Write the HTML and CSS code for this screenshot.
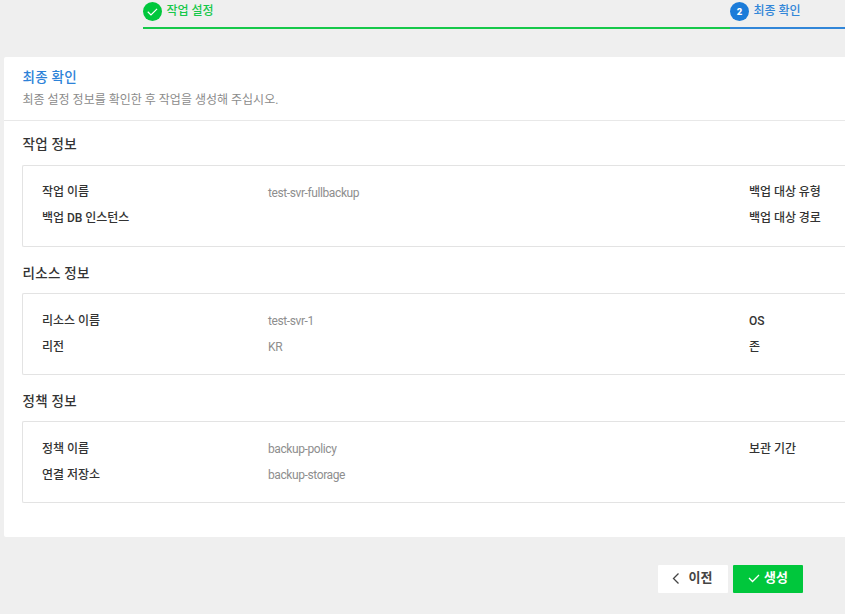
FILE: index.html
```html
<!DOCTYPE html>
<html lang="ko">
<head>
<meta charset="utf-8">
<title>최종 확인</title>
<link rel="stylesheet" href="styles.css">
</head>
<body>
<nav class="steps">
  <div class="step done"><span class="dot"><svg viewBox="0 0 20 20" width="19" height="19"><path d="M5 10.2l3.4 3.3 6.4-6.3"/></svg></span><span class="label">작업 설정</span></div>
  <div class="step current"><span class="dot">2</span><span class="label">최종 확인</span></div>
</nav>
<main class="card">
  <header class="head"><h1>최종 확인</h1><p>최종 설정 정보를 확인한 후 작업을 생성해 주십시오.</p></header>
  <section><h2>작업 정보</h2>
    <dl class="box"><dt>작업 이름</dt><dd>test-svr-fullbackup</dd><dt>백업 대상 유형</dt><dt>백업 DB 인스턴스</dt><dd></dd><dt>백업 대상 경로</dt></dl>
  </section>
  <section><h2>리소스 정보</h2>
    <dl class="box"><dt>리소스 이름</dt><dd>test-svr-1</dd><dt>OS</dt><dt>리전</dt><dd>KR</dd><dt>존</dt></dl>
  </section>
  <section><h2>정책 정보</h2>
    <dl class="box"><dt>정책 이름</dt><dd>backup-policy</dd><dt>보관 기간</dt><dt>연결 저장소</dt><dd>backup-storage</dd><dt></dt></dl>
  </section>
</main>
<footer class="actions">
  <button class="btn prev"><svg viewBox="0 0 8 12" width="8" height="12"><path d="M6.5 1.5L1.5 6.5l5 5"/></svg><span>이전</span></button>
  <button class="btn create"><svg viewBox="0 0 12 10" width="12" height="10"><path d="M1 5l3.5 3.5L11 2"/></svg><span>생성</span></button>
</footer>
</body>
</html>
```
FILE: styles.css
```css
* { box-sizing: border-box; }
body { margin: 0; width: 845px; height: 614px; overflow: hidden; background: #efefef; color: #333; font-family: Roboto, "Noto Sans CJK KR", sans-serif; font-size: 12px; }
h1, h2, p, dl, dd { margin: 0; }
svg { fill: none; stroke: currentColor; stroke-width: 1.3; }
.steps { display: flex; height: 57px; padding-left: 143px; }
.step { display: flex; align-items: flex-start; gap: 4.5px; height: 29px; border-bottom: 2px solid; padding-top: 1.5px; font-weight: 500; line-height: 19px; }
.label { padding-top: .4px; }
.done { width: 587px; color: #16c84a; }
.current { flex: 1; color: #3186d8; }
.dot { display: flex; align-items: center; justify-content: center; width: 19px; height: 19px; border-radius: 50%; background: #00c73c; color: #fff; font-size: 9.5px; font-weight: 900; }
.current .dot { background: #1a7bd9; }
.card { height: 480px; margin-left: 4px; background: #fff; border-radius: 2px 0 0 2px; }
.head { height: 64px; padding: 10px 18.5px 0; border-bottom: 1px solid #e8e8e8; }
h1 { color: #2c82d8; font-size: 13.5px; line-height: 21px; font-weight: 500; letter-spacing: .3px; }
.head p { color: #8b8b8b; font-size: 12px; line-height: 24px; }
section { height: 128px; padding: 13px 0 0 18px; }
h2 { padding-left: .5px; font-size: 13.5px; line-height: 21px; font-weight: 500; letter-spacing: .3px; margin-bottom: 10px; }
section + section h2 { padding-top: 1px; margin-bottom: 9px; }
.box { display: grid; grid-template-columns: 226px 481px 1fr; grid-auto-rows: 26px; height: 82px; padding: 13px 0 0 19px; border: 1px solid #e3e3e3; border-right: 0; border-radius: 2px 0 0 2px; line-height: 26px; }
section + section .box { padding-top: 14px; }
dt { font-weight: 500; font-size: 12px; letter-spacing: -0.05px; white-space: nowrap; }
dd { color: #8e8e8e; font-size: 12px; letter-spacing: -0.4px; }
section:first-of-type dd { padding-top: 1px; }
.actions { display: flex; justify-content: flex-end; gap: 5px; padding: 28px 42px 0 0; }
.btn { display: flex; align-items: center; justify-content: center; width: 70px; height: 28px; padding: 0 0 2px; border: 0; border-radius: 1px; background: #fff; color: #444; font: 700 13px/26px Roboto, "Noto Sans CJK KR", sans-serif; }
.prev { gap: 9px; padding-right: 2px; }
.create { gap: 4px; background: #00c73c; color: #fff; }
```
